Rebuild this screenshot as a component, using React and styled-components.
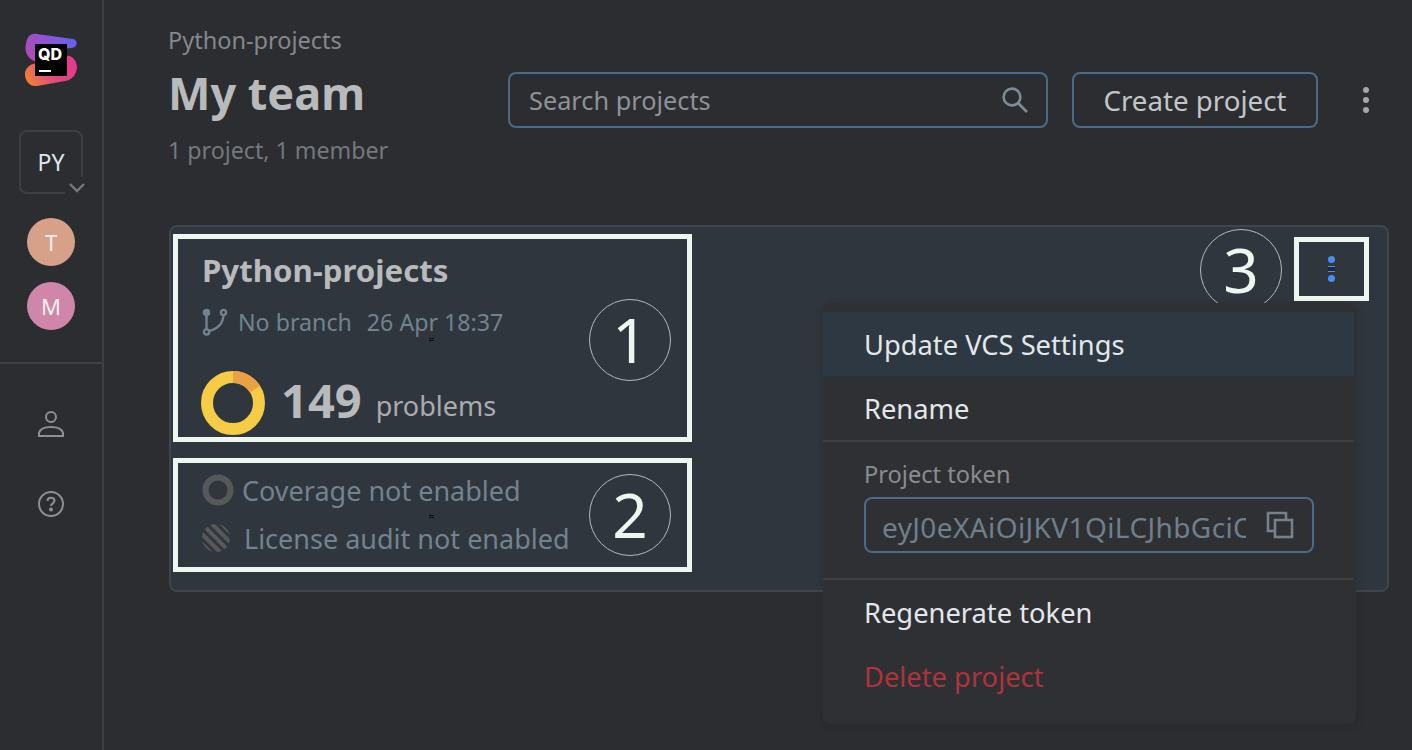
import styled, { createGlobalStyle } from "styled-components";

const GlobalStyle = createGlobalStyle`
  html, body {
    margin: 0;
    height: 100%;
    background: #2b2d30;
  }
  body {
    font-family: "Noto Sans", "Open Sans", sans-serif;
    overflow: hidden;
  }
  * {
    box-sizing: border-box;
  }
`;

const Page = styled.div`
  display: flex;
  width: 1412px;
  height: 750px;
  background: #2b2d30;
`;

// Sidebar
const Sidebar = styled.aside`
  width: 104px;
  flex-shrink: 0;
  border-right: 2px solid #3e3f42;
  display: flex;
  flex-direction: column;
  align-items: center;
`;

const LogoWrap = styled.div`
  width: 60px;
  height: 60px;
  margin: 30px 0 0 8px;
`;

const TeamBox = styled.div`
  position: relative;
  width: 64px;
  height: 64px;
  margin-top: 40px;
  border: 2px solid #3e3f42;
  border-radius: 8px;
  display: flex;
  align-items: center;
  justify-content: center;
  color: #dfe6ee;
  font-size: 23px;
`;

const ChevronNotch = styled.div`
  position: absolute;
  right: -8px;
  bottom: -7px;
  width: 24px;
  height: 22px;
  background: #2b2d30;
  display: flex;
  align-items: center;
  justify-content: center;
`;

const Avatar = styled.div`
  width: 48px;
  height: 48px;
  border-radius: 50%;
  margin-top: ${(props) => props.$top}px;
  background: ${(props) => props.$color};
  color: #f6f1ee;
  font-size: 22px;
  display: flex;
  align-items: center;
  justify-content: center;
`;

const SideDivider = styled.div`
  width: 100%;
  height: 2px;
  margin-top: 32px;
  background: #3e3f42;
`;

const SideIcon = styled.div`
  width: 28px;
  height: 28px;
  margin-top: ${(props) => props.$top}px;
  display: flex;
  align-items: center;
  justify-content: center;
`;

// Main area
const Main = styled.main`
  flex: 1;
  padding: 24px 23px 0 64px;
  min-width: 0;
`;

const Header = styled.header`
  display: flex;
  align-items: flex-start;
`;

const TitleBlock = styled.div`
  width: 340px;
  flex-shrink: 0;
`;

const Breadcrumb = styled.div`
  color: #85888c;
  font-size: 23.5px;
  line-height: 33px;
`;

const Title = styled.h1`
  margin: 6px 0 0;
  color: #b9babb;
  font-size: 45px;
  line-height: 60px;
  font-weight: 700;
`;

const Subtitle = styled.div`
  margin-top: 12px;
  color: #75787c;
  font-size: 23.2px;
  line-height: 30px;
`;

const Actions = styled.div`
  display: flex;
  align-items: center;
  margin-top: 48px;
`;

const SearchField = styled.div`
  width: 540px;
  height: 56px;
  padding: 0 16px 0 19px;
  border: 2px solid #4b6a87;
  border-radius: 8px;
  display: flex;
  align-items: center;
  justify-content: space-between;
  color: #8f9296;
  font-size: 25.3px;
`;

const CreateButton = styled.button`
  width: 246px;
  height: 56px;
  margin-left: 24px;
  background: transparent;
  border: 2px solid #4b6a87;
  border-radius: 8px;
  color: #c3c5c8;
  font-family: inherit;
  font-size: 27.7px;
`;

const KebabWrap = styled.div`
  margin-left: 45px;
  display: flex;
  flex-direction: column;
  gap: 4px;
`;

const Dot = styled.span`
  width: ${(props) => props.$size}px;
  height: ${(props) => props.$size}px;
  border-radius: 50%;
  background: ${(props) => props.$color};
`;

// Project card
const Card = styled.section`
  position: relative;
  height: 367px;
  margin: 60px 0 0 1px;
  padding: 7px 2px;
  background: #2f363e;
  border: 2px solid #3d454e;
  border-radius: 8px;
  display: flex;
  flex-direction: column;
  gap: 16px;
`;

const Marked = styled.div`
  position: relative;
  width: 519px;
  height: ${(props) => props.$height}px;
  border: 5px solid #eef6f0;
  display: flex;
  flex-direction: column;
  padding: ${(props) => props.$pad};
`;

const ProjectName = styled.div`
  color: #b9babb;
  font-size: 31.2px;
  line-height: 36px;
  font-weight: 700;
`;

const MetaRow = styled.div`
  margin-top: 18px;
  display: flex;
  align-items: center;
  color: #73828f;
  font-size: 23.2px;
  line-height: 32px;
`;

const BranchText = styled.span`
  margin-left: 10px;
  margin-right: 15px;
`;

const ProblemsRow = styled.div`
  margin-top: 33px;
  display: flex;
  align-items: center;
  margin-left: -1px;
`;

const ProblemCount = styled.span`
  margin: -6px 0 0 16px;
  color: #b9babb;
  font-size: 47px;
  line-height: 52px;
  font-weight: 700;
`;

const ProblemLabel = styled.span`
  margin-left: 14px;
  margin-top: 6px;
  color: #a9acae;
  font-size: 27px;
  line-height: 36px;
`;

const StatusRow = styled.div`
  display: flex;
  align-items: center;
  height: 48px;
  color: #73828f;
  font-size: 27px;
`;

const StatusText = styled.span`
  margin-left: ${(props) => props.$left}px;
`;

const Callout = styled.div`
  position: absolute;
  top: ${(props) => props.$top}px;
  right: ${(props) => props.$right}px;
  width: 82px;
  height: 82px;
  border: 1px solid #b4b9b8;
  border-radius: 50%;
  color: #eef6f0;
  font-size: 62px;
  line-height: 78px;
  text-align: center;
`;

const Speck = styled.span`
  position: absolute;
  top: ${(props) => props.$top}px;
  left: 251px;
  width: 5px;
  height: 3px;
  border-top: 1px solid #0c0c0c;
  border-bottom: 1px solid #0c0c0c;
`;

const MenuMark = styled.div`
  position: absolute;
  top: 10px;
  right: 18px;
  width: 75px;
  height: 64px;
  border: 5px solid #eef6f0;
  display: flex;
  flex-direction: column;
  align-items: center;
  justify-content: center;
  gap: 3px;
`;

const MiddleDot = styled.span`
  width: 7px;
  height: 6px;
  border-top: 1px solid #4a8ff0;
  border-bottom: 1px solid #4a8ff0;
  background: #1c2a3c;
`;

// Dropdown
const Menu = styled.div`
  position: absolute;
  top: 76px;
  left: 652px;
  width: 533px;
  height: 421px;
  padding: 9px 2px 0 0;
  background: #2f3033;
  border-radius: 8px;
  box-shadow: 0 2px 10px rgba(0, 0, 0, 0.12);
`;

const MenuItem = styled.div`
  height: 64px;
  padding-left: 41px;
  display: flex;
  align-items: center;
  background: ${(props) => (props.$active ? "#2e3842" : "transparent")};
  color: ${(props) => (props.$danger ? "#b0333c" : "#e4e7ea")};
  font-size: 27.3px;
`;

const MenuLine = styled.div`
  height: 2px;
  background: #3e3f42;
`;

const TokenSection = styled.div`
  height: 136px;
  padding: 16px 41px 0;
`;

const TokenLabel = styled.div`
  color: #8a8c8f;
  font-size: 23.6px;
  line-height: 32px;
`;

const TokenField = styled.div`
  width: 450px;
  height: 56px;
  margin-top: 7px;
  padding: 0 18px 0 16px;
  border: 2px solid #4b6a87;
  border-radius: 8px;
  display: flex;
  align-items: center;
  justify-content: space-between;
`;

const TokenValue = styled.span`
  width: 364px;
  padding-top: 3px;
  overflow: hidden;
  white-space: nowrap;
  color: #6f7f8d;
  font-size: 28px;
  letter-spacing: 0.4px;
`;

const Logo = () => (
  <svg width="60" height="60" viewBox="0 0 60 60">
    <defs>
      <linearGradient id="qd-top" x1="0" y1="0.6" x2="1" y2="0.2">
        <stop offset="0" stopColor="#b24bb5" />
        <stop offset="0.55" stopColor="#8a55d8" />
        <stop offset="1" stopColor="#5f63f5" />
      </linearGradient>
      <linearGradient id="qd-bottom" x1="0" y1="0.7" x2="1" y2="0.4">
        <stop offset="0" stopColor="#ef8136" />
        <stop offset="0.5" stopColor="#e4477f" />
        <stop offset="1" stopColor="#e6398e" />
      </linearGradient>
    </defs>
    <path
      d="M12 4 L48 9 C53 10 53 17 47 18 L22 20 L22 32 L12 32 C3 30 -1 22 1 14 C2 7 5 3 12 4 Z"
      fill="url(#qd-top)"
    />
    <path
      d="M12 33 L40 26 C48 24 52 32 52 38 C51 45 47 50 40 51 L12 56 C5 57 0 51 0 44 C0 38 5 34 12 33 Z"
      fill="url(#qd-bottom)"
    />
    <rect x="10" y="14" width="32" height="32" fill="#000" />
    <text
      x="13"
      y="30"
      fill="#fff"
      fontFamily="Inter, sans-serif"
      fontWeight="800"
      fontSize="16"
    >
      QD
    </text>
    <rect x="14" y="40" width="12" height="2" fill="#fff" />
  </svg>
);

const Chevron = () => (
  <svg width="18" height="12" viewBox="0 0 18 12" fill="none">
    <path d="M2 2 L9 9 L16 2" stroke="#77797c" strokeWidth="2.4" />
  </svg>
);

const PersonIcon = () => (
  <svg width="28" height="28" viewBox="0 0 28 28" fill="none" stroke="#8d8f92" strokeWidth="2">
    <circle cx="14" cy="7" r="5" />
    <path d="M2 26 L2 23 C3 19 8 17 14 17 C20 17 25 19 26 23 L26 26 Z" />
  </svg>
);

const HelpIcon = () => (
  <svg width="28" height="28" viewBox="0 0 28 28" fill="none" stroke="#8d8f92" strokeWidth="2">
    <circle cx="14" cy="14" r="12" />
    <path d="M10.5 11 C10.5 8.8 12 7.8 14 7.8 C16 7.8 17.5 9 17.5 10.8 C17.5 13.4 14 13.4 14 16" />
    <circle cx="14" cy="19.6" r="1" fill="#8d8f92" />
  </svg>
);

const SearchIcon = () => (
  <svg width="30" height="30" viewBox="0 0 30 30" fill="none" stroke="#7d8c96" strokeWidth="2.6">
    <circle cx="12" cy="12" r="8.4" />
    <path d="M18 18 L27 27" />
  </svg>
);

const BranchIcon = () => (
  <svg width="26" height="28" viewBox="0 0 26 28" fill="none" stroke="#73828f" strokeWidth="2.4">
    <circle cx="4.5" cy="4.5" r="2.6" fill="#73828f" />
    <circle cx="21.5" cy="4.5" r="2.6" />
    <circle cx="4.5" cy="24" r="2.6" />
    <path d="M4.5 7 L4.5 21.5 M7 23 C15 21 21 16 21.5 7" />
  </svg>
);

const Donut = () => (
  <svg width="64" height="64" viewBox="0 0 64 64" fill="none">
    <circle cx="32" cy="32" r="26" stroke="#f6cb45" strokeWidth="12" />
    <path d="M32 6 A26 26 0 0 1 54 18.2" stroke="#eaa144" strokeWidth="12" />
  </svg>
);

const CoverageIcon = () => (
  <svg width="32" height="32" viewBox="0 0 32 32" fill="none">
    <circle cx="16" cy="16" r="12.5" stroke="#565859" strokeWidth="6" />
  </svg>
);

const LicenseIcon = () => (
  <svg width="28" height="28" viewBox="0 0 28 28">
    <defs>
      <clipPath id="license-clip">
        <circle cx="14" cy="14" r="14" />
      </clipPath>
    </defs>
    <g clipPath="url(#license-clip)" stroke="#565859" strokeWidth="4.2">
      <path d="M-30 -10 L10 30 M-20 -10 L20 30 M-10 -10 L30 30 M0 -10 L40 30 M10 -10 L50 30" />
    </g>
  </svg>
);

const CopyIcon = () => (
  <svg width="28" height="28" viewBox="0 0 28 28" fill="none" stroke="#74818c" strokeWidth="2.6">
    <path d="M20 9 L20 2 L2 2 L2 20 L9 20" />
    <rect x="9" y="9" width="17" height="17" />
  </svg>
);

export default function App() {
  return (
    <Page>
      <GlobalStyle />
      <Sidebar>
        <LogoWrap>
          <Logo />
        </LogoWrap>
        <TeamBox>
          PY
          <ChevronNotch>
            <Chevron />
          </ChevronNotch>
        </TeamBox>
        <Avatar $top={24} $color="#d7a088">T</Avatar>
        <Avatar $top={16} $color="#cf86a8">M</Avatar>
        <SideDivider />
        <SideIcon $top={46}>
          <PersonIcon />
        </SideIcon>
        <SideIcon $top={52}>
          <HelpIcon />
        </SideIcon>
      </Sidebar>

      <Main>
        <Header>
          <TitleBlock>
            <Breadcrumb>Python-projects</Breadcrumb>
            <Title>My team</Title>
            <Subtitle>1 project, 1 member</Subtitle>
          </TitleBlock>
          <Actions>
            <SearchField>
              Search projects
              <SearchIcon />
            </SearchField>
            <CreateButton>Create project</CreateButton>
            <KebabWrap>
              <Dot $size={6} $color="#a5a7a9" />
              <Dot $size={6} $color="#a5a7a9" />
              <Dot $size={6} $color="#a5a7a9" />
            </KebabWrap>
          </Actions>
        </Header>

        <Card>
          <Marked $height={208} $pad="13px 24px 0">
            <ProjectName>Python-projects</ProjectName>
            <MetaRow>
              <BranchIcon />
              <BranchText>No branch</BranchText>
              26 Apr 18:37
            </MetaRow>
            <ProblemsRow>
              <Donut />
              <ProblemCount>149</ProblemCount>
              <ProblemLabel>problems</ProblemLabel>
            </ProblemsRow>
            <Callout $top={60} $right={16}>1</Callout>
            <Speck $top={99} />
          </Marked>
          <Marked $height={114} $pad="3px 24px 0">
            <StatusRow>
              <CoverageIcon />
              <StatusText $left={8}>Coverage not enabled</StatusText>
            </StatusRow>
            <StatusRow>
              <LicenseIcon />
              <StatusText $left={14}>License audit not enabled</StatusText>
            </StatusRow>
            <Callout $top={11} $right={16}>2</Callout>
            <Speck $top={52} />
          </Marked>

          <Callout $top={2} $right={105}>3</Callout>
          <MenuMark>
            <Dot $size={7} $color="#4a8ff0" />
            <MiddleDot />
            <Dot $size={7} $color="#4a8ff0" />
          </MenuMark>

          <Menu>
            <MenuItem $active>Update VCS Settings</MenuItem>
            <MenuItem>Rename</MenuItem>
            <MenuLine />
            <TokenSection>
              <TokenLabel>Project token</TokenLabel>
              <TokenField>
                <TokenValue>eyJ0eXAiOiJKV1QiLCJhbGciOiJIUzI1NiJ9</TokenValue>
                <CopyIcon />
              </TokenField>
            </TokenSection>
            <MenuLine />
            <MenuItem>Regenerate token</MenuItem>
            <MenuItem $danger>Delete project</MenuItem>
          </Menu>
        </Card>
      </Main>
    </Page>
  );
}
